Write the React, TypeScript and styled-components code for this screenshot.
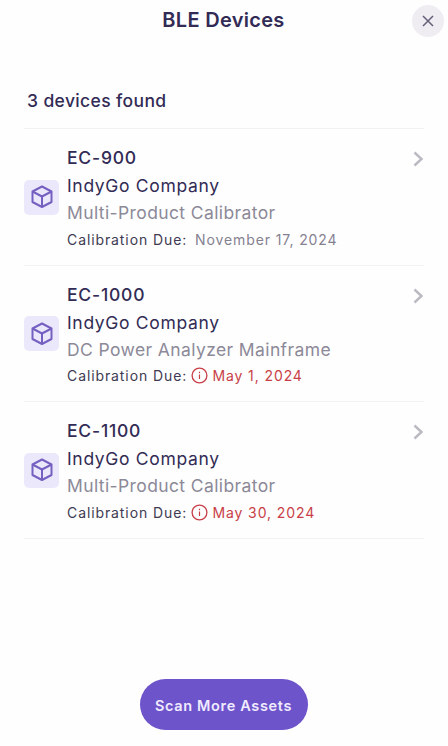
import React from 'react';
import styled, { createGlobalStyle } from 'styled-components';

const GlobalStyle = createGlobalStyle`
  * { box-sizing: border-box; }
  body {
    margin: 0;
    background: #fefefe;
    color: #322b55;
    font-family: Inter, "Liberation Sans", sans-serif;
  }
  button { font: inherit; border: 0; padding: 0; cursor: pointer; }
  svg { display: block; flex: none; }
`;

const Screen = styled.div`
  height: 746px;
  display: flex;
  flex-direction: column;
  overflow: hidden;
`;

const Header = styled.header`
  height: 41px;
  flex: none;
  display: grid;
  grid-template-columns: 1fr auto 1fr;
  align-items: center;
  padding-right: 4px;
`;

const Title = styled.h1`
  grid-column: 2;
  margin: 0 0 1px 3px;
  font-size: 20px;
  font-weight: 600;
  line-height: 40px;
  letter-spacing: 0.3px;
`;

const CloseButton = styled.button`
  justify-self: end;
  width: 32px;
  height: 32px;
  border-radius: 50%;
  background: #efedf2;
  color: #655f78;
  display: grid;
  place-items: center;
`;

const Content = styled.main`
  flex: 1;
  padding: 48px 24px 0;
`;

const Count = styled.h2`
  margin: 0;
  height: 39px;
  padding-left: 3px;
  font-size: 17.5px;
  font-weight: 500;
  line-height: 24px;
  letter-spacing: 0.37px;
`;

const List = styled.ul`
  margin: 0;
  padding: 0;
  list-style: none;
  border-top: 1px solid #f1f0f3;
`;

const Row = styled.li`
  height: 136.5px;
  border-bottom: 1px solid #f1f0f3;
  display: grid;
  grid-template-columns: 35px 1fr 12px;
  column-gap: 8px;
  padding-top: 14px;
`;

const IconTile = styled.div`
  margin-top: 36.5px;
  width: 35px;
  height: 35px;
  border-radius: 5px;
  background: #ece8fb;
  color: #7560c2;
  display: grid;
  place-items: center;
`;

const Details = styled.div`
  white-space: nowrap;
`;

const spacing = { name: 0.8, company: 0.67, model: 0.39 };

const Line = styled.div<{ $kind: 'name' | 'company' | 'model' }>`
  height: 28px;
  line-height: ${p => (p.$kind === 'model' ? 28 : 29)}px;
  font-size: 17.5px;
  font-weight: ${p => (p.$kind === 'name' ? 500 : 400)};
  letter-spacing: ${p => spacing[p.$kind]}px;
  color: ${p => (p.$kind === 'model' ? '#8c8998' : '#322b55')};
`;

const Due = styled.div`
  display: flex;
  align-items: center;
  height: 24px;
  font-size: 14px;
  letter-spacing: 0.9px;
`;

const DueLabel = styled.span`
  width: 124px;
  color: #403b52;
`;

const DueDate = styled.span<{ $overdue: boolean }>`
  display: flex;
  align-items: center;
  gap: 4px;
  padding-left: ${p => (p.$overdue ? 0.4 : 4)}px;
  color: ${p => (p.$overdue ? '#c83f47' : '#858191')};
`;

const Chevron = styled.svg`
  margin-top: 8px;
  color: #bbb9c2;
`;

const Footer = styled.footer`
  flex: none;
  height: 67px;
  display: flex;
  justify-content: center;
  align-items: flex-start;
`;

const ScanButton = styled.button`
  width: 168px;
  height: 51px;
  margin-right: 1px;
  padding-top: 1px;
  border-radius: 26px;
  background: #6e54cb;
  color: #f0ebff;
  && { font-size: 14.5px; font-weight: 600; letter-spacing: 0.65px; }
`;

const CubeIcon = () => (
  <svg width="24" height="24" viewBox="0 0 24 24" fill="none" stroke="currentColor" strokeWidth="2" strokeLinejoin="round">
    <path d="M12 1.5 21.5 6.5v10.5L12 22 2.5 17V6.5Z" />
    <path d="M2.5 6.5 12 11.5l9.5-5M12 11.5v10.5" />
  </svg>
);

const AlertIcon = () => (
  <svg width="17" height="17" viewBox="0 0 17 17" fill="none" stroke="currentColor">
    <circle cx="8.5" cy="8.5" r="7.4" strokeWidth="1.3" />
    <path d="M8.5 7.5v4.5M8.5 4.8v1.4" strokeWidth="1.2" />
  </svg>
);

const devices = [
  { name: 'EC-900', company: 'IndyGo Company', model: 'Multi-Product Calibrator', due: 'November 17, 2024', overdue: false },
  { name: 'EC-1000', company: 'IndyGo Company', model: 'DC Power Analyzer Mainframe', due: 'May 1, 2024', overdue: true },
  { name: 'EC-1100', company: 'IndyGo Company', model: 'Multi-Product Calibrator', due: 'May 30, 2024', overdue: true },
];

export default function App() {
  return (
    <Screen>
      <GlobalStyle />
      <Header>
        <Title>BLE Devices</Title>
        <CloseButton aria-label="Close">
          <svg width="12" height="12" viewBox="0 0 12 12" fill="none" stroke="currentColor" strokeWidth="1.5">
            <path d="m1 1 10 10M11 1 1 11" />
          </svg>
        </CloseButton>
      </Header>
      <Content>
        <Count>{devices.length} devices found</Count>
        <List>
          {devices.map(d => (
            <Row key={d.name}>
              <IconTile><CubeIcon /></IconTile>
              <Details>
                <Line $kind="name">{d.name}</Line>
                <Line $kind="company">{d.company}</Line>
                <Line $kind="model">{d.model}</Line>
                <Due>
                  <DueLabel>Calibration Due:</DueLabel>
                  <DueDate $overdue={d.overdue}>
                    {d.overdue && <AlertIcon />}
                    {d.due}
                  </DueDate>
                </Due>
              </Details>
              <Chevron width="12" height="16" viewBox="0 0 12 16" fill="none" stroke="currentColor" strokeWidth="2.4">
                <path d="m2.5 1.5 7 6.5-7 6.5" />
              </Chevron>
            </Row>
          ))}
        </List>
      </Content>
      <Footer>
        <ScanButton>Scan More Assets</ScanButton>
      </Footer>
    </Screen>
  );
}
